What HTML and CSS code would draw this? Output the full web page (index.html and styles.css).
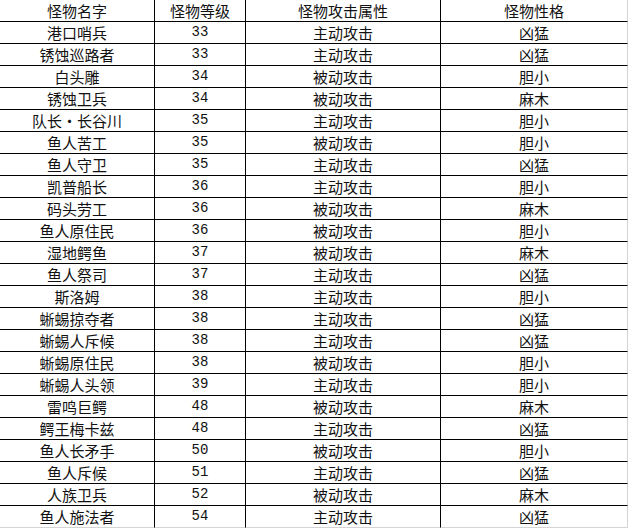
FILE: index.html
```html
<!DOCTYPE html>
<html lang="zh-CN">
<head>
<meta charset="utf-8">
<title>怪物列表</title>
<link rel="stylesheet" href="styles.css">
</head>
<body>
<table class="monsters">
  <colgroup>
    <col class="c-name">
    <col class="c-level">
    <col class="c-attack">
    <col class="c-nature">
  </colgroup>
  <thead>
    <tr><th>怪物名字</th><th>怪物等级</th><th>怪物攻击属性</th><th>怪物性格</th></tr>
  </thead>
  <tbody>
    <tr><td>港口哨兵</td><td class="num">33</td><td>主动攻击</td><td>凶猛</td></tr>
    <tr><td>锈蚀巡路者</td><td class="num">33</td><td>主动攻击</td><td>凶猛</td></tr>
    <tr><td>白头雕</td><td class="num">34</td><td>被动攻击</td><td>胆小</td></tr>
    <tr><td>锈蚀卫兵</td><td class="num">34</td><td>被动攻击</td><td>麻木</td></tr>
    <tr><td>队长·长谷川</td><td class="num">35</td><td>主动攻击</td><td>胆小</td></tr>
    <tr><td>鱼人苦工</td><td class="num">35</td><td>被动攻击</td><td>胆小</td></tr>
    <tr><td>鱼人守卫</td><td class="num">35</td><td>主动攻击</td><td>凶猛</td></tr>
    <tr><td>凯普船长</td><td class="num">36</td><td>主动攻击</td><td>胆小</td></tr>
    <tr><td>码头劳工</td><td class="num">36</td><td>被动攻击</td><td>麻木</td></tr>
    <tr><td>鱼人原住民</td><td class="num">36</td><td>被动攻击</td><td>胆小</td></tr>
    <tr><td>湿地鳄鱼</td><td class="num">37</td><td>被动攻击</td><td>麻木</td></tr>
    <tr><td>鱼人祭司</td><td class="num">37</td><td>主动攻击</td><td>凶猛</td></tr>
    <tr><td>斯洛姆</td><td class="num">38</td><td>主动攻击</td><td>胆小</td></tr>
    <tr><td>蜥蜴掠夺者</td><td class="num">38</td><td>主动攻击</td><td>凶猛</td></tr>
    <tr><td>蜥蜴人斥候</td><td class="num">38</td><td>主动攻击</td><td>凶猛</td></tr>
    <tr><td>蜥蜴原住民</td><td class="num">38</td><td>被动攻击</td><td>胆小</td></tr>
    <tr><td>蜥蜴人头领</td><td class="num">39</td><td>主动攻击</td><td>胆小</td></tr>
    <tr><td>雷鸣巨鳄</td><td class="num">48</td><td>被动攻击</td><td>麻木</td></tr>
    <tr><td>鳄王梅卡兹</td><td class="num">48</td><td>主动攻击</td><td>凶猛</td></tr>
    <tr><td>鱼人长矛手</td><td class="num">50</td><td>被动攻击</td><td>胆小</td></tr>
    <tr><td>鱼人斥候</td><td class="num">51</td><td>主动攻击</td><td>凶猛</td></tr>
    <tr><td>人族卫兵</td><td class="num">52</td><td>被动攻击</td><td>麻木</td></tr>
    <tr><td>鱼人施法者</td><td class="num">54</td><td>主动攻击</td><td>凶猛</td></tr>
  </tbody>
</table>
</body>
</html>
```
FILE: styles.css
```css
html, body {
  margin: 0;
  padding: 0;
  background: #fff;
}

.monsters {
  table-layout: fixed;
  border-collapse: separate;
  border-spacing: 0;
  width: 628px;
  font-family: "Noto Sans CJK SC", "Liberation Sans", sans-serif;
  font-size: 15px;
  color: #111;
}

.c-name { width: 155px; }
.c-level { width: 91px; }
.c-attack { width: 195px; }
.c-nature { width: 187px; }

.monsters th,
.monsters td {
  box-sizing: border-box;
  height: 22px;
  padding: 0;
  font-weight: normal;
  text-align: center;
  vertical-align: middle;
  line-height: 21px;
  border-right: 1px solid #000;
  border-bottom: 1px solid #000;
  white-space: nowrap;
  overflow: hidden;
}

.monsters th:last-child,
.monsters td:last-child {
  border-right-color: #d4d4d4;
}

.monsters tbody tr:last-child td {
  border-bottom-color: #d4d4d4;
}

.monsters .num {
  font-family: "Liberation Mono", "DejaVu Sans Mono", monospace;
  font-size: 14px;
}
```
